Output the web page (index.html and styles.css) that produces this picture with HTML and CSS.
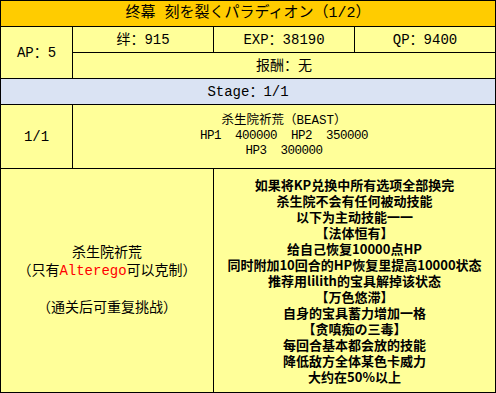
FILE: index.html
```html
<!DOCTYPE html>
<html>
<head>
<meta charset="utf-8">
<link rel="stylesheet" href="styles.css">
</head>
<body>
<div class="quest">
  <div class="cell title">终幕 刻を裂くパラディオン（1/2）</div>
  <div class="cell ap">AP：5</div>
  <div class="cell">绊：915</div>
  <div class="cell">EXP：38190</div>
  <div class="cell">QP：9400</div>
  <div class="cell reward">报酬：无</div>
  <div class="cell stage">Stage：1/1</div>
  <div class="cell wave">1/1</div>
  <div class="cell boss">
    <div>杀生院祈荒（BEAST）</div>
    <div class="hp">HP1&nbsp;&nbsp;400000&nbsp;&nbsp;HP2&nbsp;&nbsp;350000</div>
    <div class="hp">HP3&nbsp;&nbsp;300000</div>
  </div>
  <div class="cell enemy">
    <div>杀生院祈荒</div>
    <div>（只有<span class="red">Alterego</span>可以克制）</div>
    <div class="gap">（通关后可重复挑战）</div>
  </div>
  <div class="cell notes">
    <div>如果将KP兑换中所有选项全部换完</div>
    <div>杀生院不会有任何被动技能</div>
    <div>以下为主动技能一一</div>
    <div>【法体恒有】</div>
    <div>给自己恢复10000点HP</div>
    <div>同时附加10回合的HP恢复里提高10000状态</div>
    <div>推荐用lilith的宝具解掉该状态</div>
    <div>【万色悠滞】</div>
    <div>自身的宝具蓄力增加一格</div>
    <div>【贪嗔痴の三毒】</div>
    <div>每回合基本都会放的技能</div>
    <div>降低敌方全体某色卡威力</div>
    <div>大约在50%以上</div>
  </div>
</div>
</body>
</html>
```
FILE: styles.css
```css
html, body {
  margin: 0;
  padding: 0;
  background: #ffffff;
}

.quest {
  width: 496px;
  height: 393px;
  box-sizing: border-box;
  padding: 1px;
  background: #000000;
  display: grid;
  grid-template-columns: 71px 140px 140px 140px;
  grid-template-rows: 25px 25px 25px 25px 63px 223px;
  gap: 1px;
  font-family: "Liberation Mono", "Noto Sans CJK SC", monospace;
  font-size: 14px;
  line-height: 16px;
  color: #000000;
}

.cell {
  background: #ffff99;
  display: flex;
  flex-direction: column;
  align-items: center;
  justify-content: center;
  text-align: center;
  white-space: nowrap;
}

.title {
  grid-column: 1 / -1;
  background: #ffcc00;
  font-size: 15px;
}

.ap {
  grid-row: 2 / 4;
}

.reward {
  grid-column: 2 / 5;
}

.stage {
  grid-column: 1 / -1;
  background: #dae3f3;
}

.boss {
  grid-column: 2 / 5;
  font-size: 12.5px;
  line-height: 15px;
}

.boss .hp {
  letter-spacing: -0.5px;
}

.enemy {
  grid-column: 1 / 3;
  line-height: 18.5px;
}

.enemy .gap {
  margin-top: 18.5px;
}

.red {
  color: #ff0000;
}

.notes {
  grid-column: 3 / 5;
  font-family: "Noto Sans CJK SC", sans-serif;
  font-size: 13px;
  font-weight: 700;
  line-height: 16px;
}
```
